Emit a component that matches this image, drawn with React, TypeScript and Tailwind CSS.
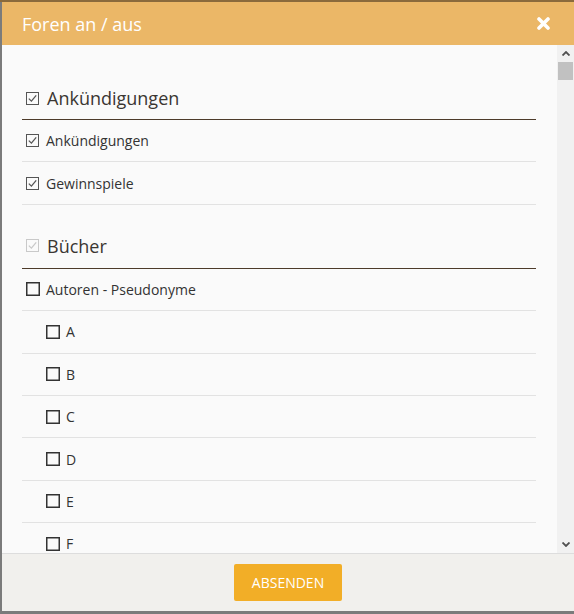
import React from "react";

type Item = { label: string; checked?: boolean; indent?: boolean };

const sections: { title: string; headChecked: "on" | "disabled"; items: Item[] }[] = [
  {
    title: "Ankündigungen",
    headChecked: "on",
    items: [
      { label: "Ankündigungen", checked: true },
      { label: "Gewinnspiele", checked: true },
    ],
  },
  {
    title: "Bücher",
    headChecked: "disabled",
    items: [
      { label: "Autoren - Pseudonyme" },
      ...["A", "B", "C", "D", "E", "F"].map((l) => ({ label: l, indent: true })),
    ],
  },
];

function CheckedBox({ className }: { className?: string }) {
  return (
    <svg width="13" height="13" viewBox="0 0 13 13" className={className}>
      <rect x="0.5" y="0.5" width="12" height="12" fill="none" stroke="currentColor" strokeWidth="1" />
      <path d="M2.8 6.6 L5.4 9.1 L10.2 3.4" fill="none" stroke="currentColor" strokeWidth="1.3" />
    </svg>
  );
}

function EmptyBox() {
  return (
    <svg width="14" height="14" viewBox="0 0 14 14" className="text-[#333]">
      <rect x="0.75" y="0.75" width="12.5" height="12.5" fill="none" stroke="currentColor" strokeWidth="1.5" />
    </svg>
  );
}

export default function App() {
  return (
    <div
      className="w-[574px] h-[614px] overflow-hidden bg-[#7b7b7b] border-t-2 border-[#8a6a3c]"
      style={{ fontFamily: '"Open Sans", "Noto Sans", sans-serif' }}
    >
      <div className="ml-[2px] w-[572px] flex flex-col">
        {/* Header */}
        <div className="h-[43px] bg-[#ebb767] flex items-center justify-between pl-[20px] pr-[24px]">
          <span className="text-white text-[18px] leading-none">Foren an / aus</span>
          <svg width="13" height="13" viewBox="0 0 13 13">
            <path d="M2 2 L11 11 M11 2 L2 11" stroke="white" strokeWidth="3.6" strokeLinecap="round" />
          </svg>
        </div>

        {/* Body */}
        <div className="h-[508px] flex bg-[#fafafa]">
          <div className="flex-1 overflow-hidden pl-[20px] pr-[21px] pt-[12px]">
            {sections.map((s, i) => (
              <div key={s.title}>
                <div
                  className={`${i === 0 ? "pt-[29px] pb-[9px]" : "pt-[29px] pb-[10px]"} border-b border-[#4d3b2a] flex items-center gap-[8px] pl-[4px]`}
                >
                  <CheckedBox className={s.headChecked === "on" ? "text-[#555]" : "text-[#c9c9c9]"} />
                  <span className="text-[18px] leading-[24px] text-[#3a3632]">{s.title}</span>
                </div>
                {s.items.map((it) => (
                  <div
                    key={it.label}
                    className={`h-[42.4px] border-b border-[#e2e2e2] flex items-center ${it.checked ? "gap-[7px]" : "gap-[6px]"} ${it.indent ? "pl-[24px]" : "pl-[4px]"}`}
                  >
                    {it.checked ? <CheckedBox className="text-[#555]" /> : <EmptyBox />}
                    <span className="text-[14px] text-[#333]">{it.label}</span>
                  </div>
                ))}
              </div>
            ))}
          </div>

          {/* Scrollbar */}
          <div className="w-[17px] bg-[#f1f1f1] flex flex-col">
            <div className="h-[17px] flex items-center justify-center">
              <svg width="8" height="5" viewBox="0 0 8 5">
                <path d="M0.5 4.5 L4 1 L7.5 4.5" fill="none" stroke="#505050" strokeWidth="1.8" />
              </svg>
            </div>
            <div className="h-[18px] mx-[1px] bg-[#c1c1c1]" />
            <div className="flex-1" />
            <div className="h-[17px] flex items-center justify-center">
              <svg width="8" height="5" viewBox="0 0 8 5">
                <path d="M0.5 0.5 L4 4 L7.5 0.5" fill="none" stroke="#505050" strokeWidth="1.8" />
              </svg>
            </div>
          </div>
        </div>

        {/* Footer */}
        <div className="h-[58px] border-t border-[#dddddd] bg-[#f1f0ed] flex items-center justify-center">
          <button className="w-[108px] h-[37px] bg-[#f2ae27] rounded-[2px] text-white text-[14px] uppercase">
            Absenden
          </button>
        </div>
      </div>
    </div>
  );
}
